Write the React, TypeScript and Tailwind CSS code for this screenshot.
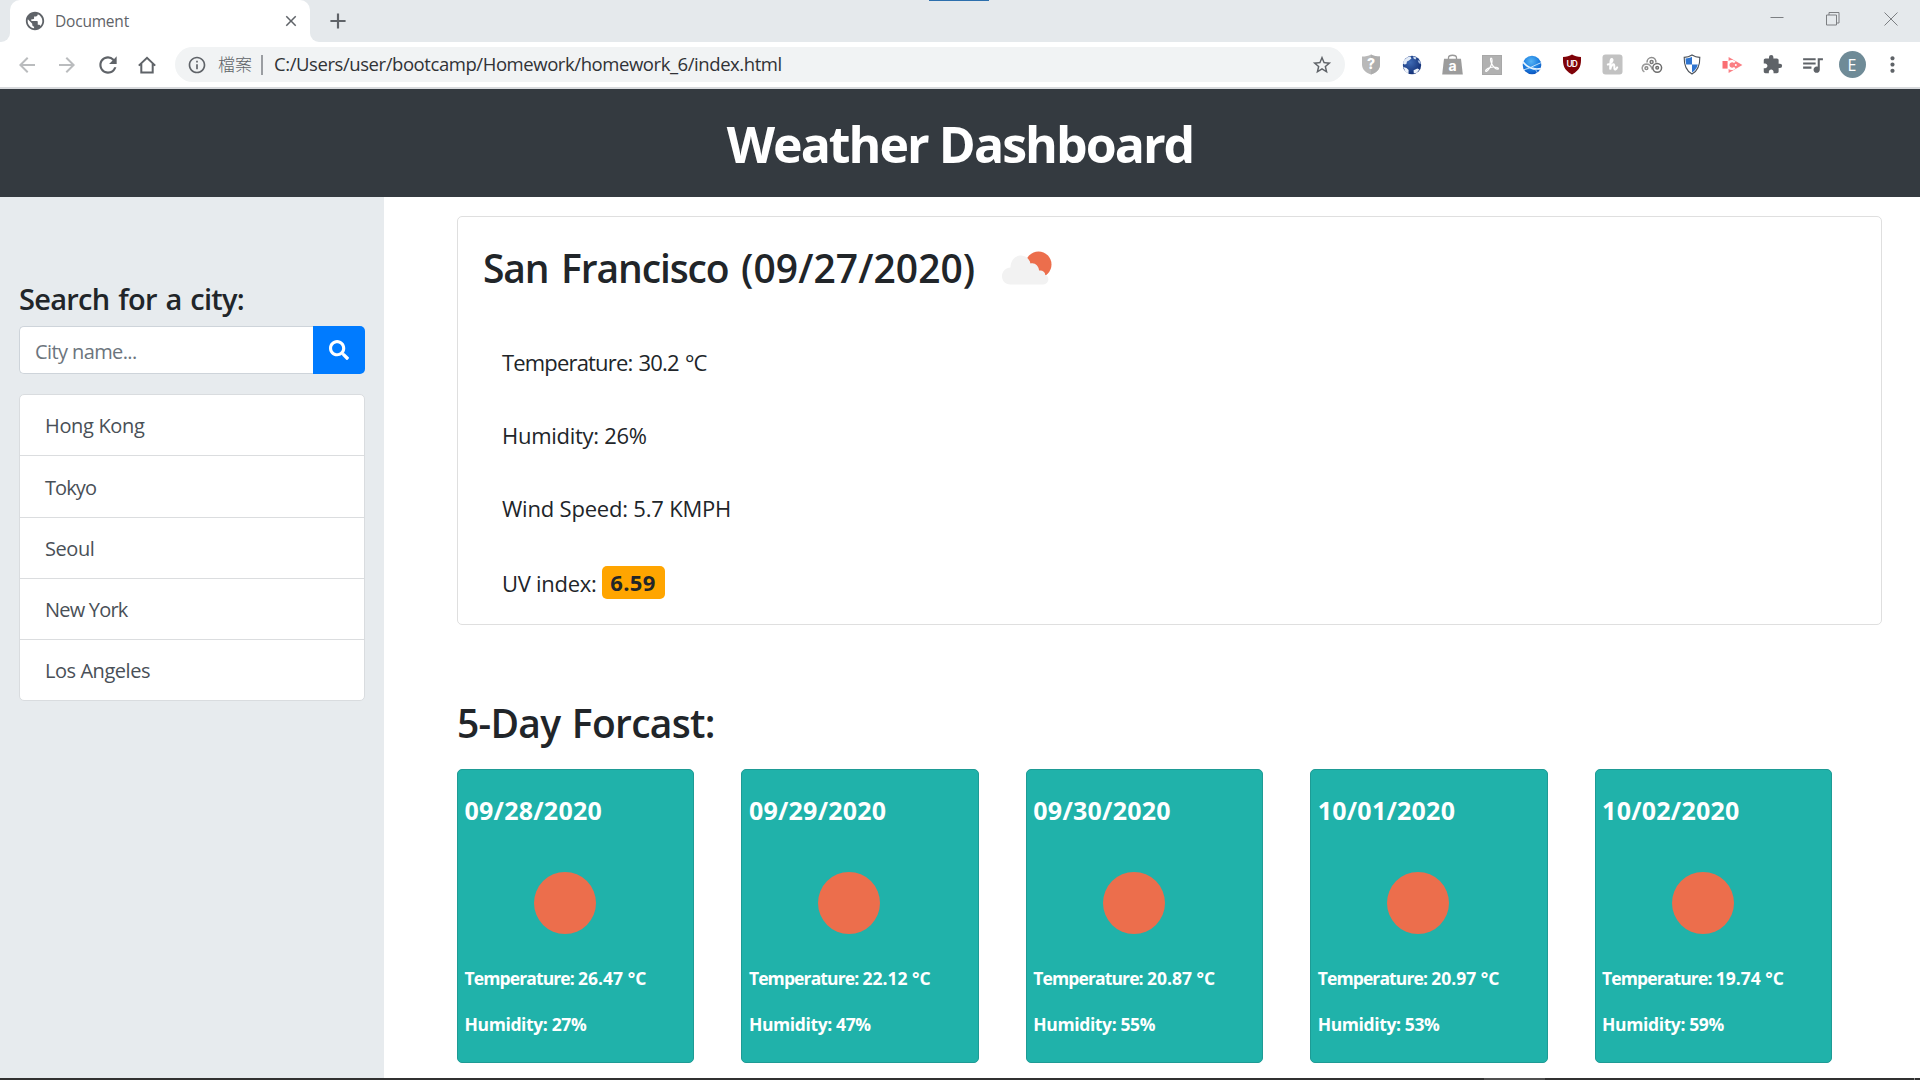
import React from "react";
import {
  MdAdd,
  MdArrowBack,
  MdArrowForward,
  MdClose,
  MdExtension,
  MdInfoOutline,
  MdMoreVert,
  MdPublic,
  MdQueueMusic,
  MdRefresh,
  MdStarOutline,
} from "react-icons/md";
import { FaSearch } from "react-icons/fa";

const cities = [
  { name: "Hong Kong", tracking: "tracking-[-0.33px]" },
  { name: "Tokyo", tracking: "tracking-[-0.9px]" },
  { name: "Seoul", tracking: "tracking-[-0.45px]" },
  { name: "New York", tracking: "tracking-[-0.8px]" },
  { name: "Los Angeles", tracking: "tracking-[-0.45px]" },
];

const forecast = [
  { date: "09/28/2020", temp: "26.47", humidity: "27" },
  { date: "09/29/2020", temp: "22.12", humidity: "47" },
  { date: "09/30/2020", temp: "20.87", humidity: "55" },
  { date: "10/01/2020", temp: "20.97", humidity: "53" },
  { date: "10/02/2020", temp: "19.74", humidity: "59" },
];

function HomeIcon() {
  return (
    <svg width="18" height="18" viewBox="0 0 18 18" fill="none" stroke="#5f6368" strokeWidth="2">
      <path d="M0.8 9.6 L9 1.8 L17.2 9.6 M3.3 7.6 V16.5 H14.7 V7.6" />
    </svg>
  );
}

function QuestionShield() {
  return (
    <svg className="mr-[2px]" width="20" height="21" viewBox="0 0 20 21">
      <path d="M10 0.5 C12.5 2 15.5 2.6 19 2.6 V10.5 C19 15.5 15 18.8 10 20.5 C5 18.8 1 15.5 1 10.5 V2.6 C4.5 2.6 7.5 2 10 0.5Z" fill="#b9b9b9" />
      <path d="M10 0.5 C12.5 2 15.5 2.6 19 2.6 V10.5 C19 15.5 15 18.8 10 20.5Z" fill="#adadad" />
      <text x="10" y="15.4" textAnchor="middle" fontFamily="Inter, sans-serif" fontWeight="800" fontSize="14" fill="#fff">?</text>
    </svg>
  );
}

function BlueGlobe() {
  return (
    <svg width="20" height="20" viewBox="0 0 20 20">
      <defs>
        <radialGradient id="navy" cx="0.4" cy="0.35" r="0.7">
          <stop offset="0" stopColor="#3f6bb5" />
          <stop offset="1" stopColor="#0f2c72" />
        </radialGradient>
      </defs>
      <circle cx="10" cy="10" r="9.2" fill="url(#navy)" />
      <path d="M2.2 5 L5.5 2.2 L8.4 1.6 L9.4 3.4 L7 5.4 L5 6.4 L4.4 9 L2.6 9.6 L1 8.6Z" fill="#e4ecf7" />
      <path d="M11 1.5 L14.5 2.4 L13.5 4.5 L11.8 3.8Z" fill="#cfdcf0" />
      <path d="M15.6 5.6 L17.6 5.6 L18.8 9 L17 8.2Z" fill="#a9bfe2" />
      <path d="M1.4 12 L4.5 13 L6.6 15 L6.5 18.4 L3.4 16.8Z" fill="#eef3fa" />
      <path d="M11.6 15.2 L15.4 13.6 L17.4 14.6 L14.8 17.8 L11.8 18.4Z" fill="#eef3fa" />
    </svg>
  );
}

function BagIcon() {
  return (
    <svg width="21" height="21" viewBox="0 0 21 21">
      <path d="M6.5 5 V3.8 C6.5 0.4 14.5 0.4 14.5 3.8 V5" fill="none" stroke="#999" strokeWidth="1.3" />
      <path d="M2 4.8 H19 L20.8 20.6 H0.2Z" fill="#9c9c9c" />
      <text x="10.5" y="17.2" textAnchor="middle" fontFamily="Inter, sans-serif" fontWeight="700" fontSize="14" fill="#fff">a</text>
    </svg>
  );
}

function PdfIcon() {
  return (
    <svg width="20" height="20" viewBox="0 0 20 20">
      <rect width="20" height="20" fill="#a8a8a8" />
      <rect x="1" y="1" width="18" height="18" fill="#b1b1b1" />
      <path d="M9.2 3.2 C8 3.2 8.6 6.2 9.6 8.6 C10.8 11.4 13.8 14.4 16 14.2 C17.4 13.6 15.2 11.8 11.4 12 C7.6 12.4 3.6 14 3.6 15.8 C4 17.8 7.4 14.4 9 10.6 C10.2 7.6 10.6 3.4 9.2 3.2Z" fill="none" stroke="#fff" strokeWidth="1.2" />
    </svg>
  );
}

function SkyGlobe() {
  return (
    <svg width="20" height="20" viewBox="0 0 20 20">
      <defs>
        <radialGradient id="sky" cx="0.45" cy="0.3" r="0.7">
          <stop offset="0" stopColor="#57b5f5" />
          <stop offset="0.6" stopColor="#1c7fe0" />
          <stop offset="1" stopColor="#0c55bf" />
        </radialGradient>
      </defs>
      <circle cx="10" cy="10" r="9.3" fill="url(#sky)" />
      <path d="M0.6 6.6 C5 12 12 15 19 13.6" fill="none" stroke="#e8f5ff" strokeWidth="1.7" />
      <path d="M1.6 14.8 C6 14 12.5 10.4 19.2 7.6" fill="none" stroke="#d5ecfd" strokeWidth="0.9" />
      <path d="M11 12.8 C14 15 15 16.4 15 17.6" fill="none" stroke="#d5ecfd" strokeWidth="0.8" />
    </svg>
  );
}

function BlockerShield() {
  return (
    <svg width="20" height="21" viewBox="0 0 20 21">
      <path d="M10 0.6 C12.5 2.3 15.5 3 19 3 C19.2 11 18.6 15.8 10 20.4 C1.4 15.8 0.8 11 1 3 C4.5 3 7.5 2.3 10 0.6Z" fill="#7f0309" />
      <text x="9.7" y="12.9" textAnchor="middle" fontFamily="Inter, sans-serif" fontWeight="600" fontSize="8.4" letterSpacing="-0.8" fill="#fff">UD</text>
    </svg>
  );
}

function ScriptH() {
  return (
    <svg width="21" height="21" viewBox="0 0 21 21">
      <rect x="0.5" y="0.5" width="20" height="20" rx="3" fill="#c2c2c2" />
      <path d="M5.8 10.6 C9.6 10 11.4 6 10 5 C8.4 4.6 8.2 9 8.2 15.6 C8.8 12 11.4 8.8 12.2 11 C12.6 13 11.8 15.8 13.4 15.6 C14.4 15.2 14.8 14.4 15.2 13.4" fill="none" stroke="#fff" strokeWidth="2" strokeLinecap="round" />
    </svg>
  );
}

function CirclesIcon() {
  return (
    <svg width="22" height="18" viewBox="0 0 22 18" fill="none" strokeWidth="1.5">
      <path d="M6 6.4 C6 3.6 8 1.6 10.6 1.6 C13.6 1.6 15.4 4 14.8 6.6" stroke="#8d8d8d" />
      <circle cx="10.6" cy="6" r="1.5" stroke="#7a7a7a" />
      <path d="M3.4 16 C-0.4 13.4 1 8.2 5.4 8 C8.4 8 10.4 10.6 11.4 13.4" stroke="#9c9c9c" />
      <circle cx="5.4" cy="12.2" r="1.4" stroke="#8a8a8a" />
      <circle cx="16.2" cy="11.8" r="4.4" stroke="#6d6d6d" />
      <circle cx="16.2" cy="11.8" r="1.3" stroke="#6d6d6d" />
    </svg>
  );
}

function CheckerShield() {
  return (
    <svg width="18" height="21" viewBox="0 0 18 21">
      <path d="M9 1 C11.4 2.6 14 3.4 16.8 3.4 C17 11 15 16.6 9 20 C3 16.6 1 11 1.2 3.4 C4 3.4 6.6 2.6 9 1Z" fill="#fff" stroke="#4b5057" strokeWidth="1.1" />
      <path d="M2.6 4.6 C5 4.4 7 3.8 9 2.8 V10.4 H3.2 C2.7 8.4 2.6 6.4 2.6 4.6Z" fill="#2f74cf" />
      <path d="M9 10.4 H14.8 C14 13.8 12 16.6 9 18.4Z" fill="#2f74cf" />
    </svg>
  );
}

function CastArrow() {
  return (
    <svg width="21" height="18" viewBox="0 0 21 18">
      <path d="M0.5 5 H5.6 V12.6 H0.5Z" fill="#fa6e73" />
      <path d="M6.6 1 L20.4 9 L6.6 17 V13 C8.4 14.6 12 14.4 13.6 12.2 L12 11 C10.4 12.4 7.6 11.6 7.4 9 C7.6 6.4 10.4 5.6 12 7 L13.6 5.8 C12 3.6 8.4 3.4 6.6 5Z" fill="#fb7f84" />
      <circle cx="13.8" cy="9" r="1" fill="#fff" />
    </svg>
  );
}

const extensions = [
  <QuestionShield />,
  <BlueGlobe />,
  <BagIcon />,
  <PdfIcon />,
  <SkyGlobe />,
  <BlockerShield />,
  <ScriptH />,
  <CirclesIcon />,
  <CheckerShield />,
  <CastArrow />,
  <MdExtension size={21} color="#5f6368" />,
  <MdQueueMusic size={25} color="#5f6368" />,
  <span className="flex size-[27px] shrink-0 items-center justify-center rounded-full bg-[#6f8b97] text-[16px] text-white">E</span>,
  <MdMoreVert size={25} color="#5f6368" />,
];

function TabStrip() {
  return (
    <div className="relative flex h-[42px] bg-[#e5e9ec]">
      <div className="absolute left-[929px] top-0 h-px w-[60px] bg-[#2c6fad]" />
      <div className="flex w-[10px] items-end bg-white">
        <div className="h-full w-full rounded-br-[9px] bg-[#e5e9ec]" />
      </div>
      <div className="flex w-[300px] items-center rounded-t-[10px] bg-white pl-[14px] pr-[10.5px]">
        <MdPublic size={22} color="#5f6368" />
        <span className="ml-[9px] flex-1 pt-[2px] text-[15.5px] tracking-[-0.2px] text-[#5f6368]">Document</span>
        <MdClose size={18} color="#5f6368" />
      </div>
      <div className="w-[10px] bg-white">
        <div className="h-full w-full rounded-bl-[9px] bg-[#e5e9ec]" />
      </div>
      <div className="flex w-[35px] items-center justify-center">
        <MdAdd size={26} color="#5f6368" />
      </div>
      <div className="ml-auto flex h-[37px] items-center pr-[22px]">
        <svg className="mr-[42px]" width="14" height="14" stroke="#7c7f82" fill="none"><path d="M0.5 5.5 H13.5" /></svg>
        <svg className="mr-[44px]" width="14" height="14" stroke="#7c7f82" fill="none"><path d="M0.5 3 H10.5 V13 H0.5Z M3 3 V0.5 H13 V11 H10.5" /></svg>
        <svg width="14" height="14" stroke="#7c7f82" fill="none"><path d="M0.5 0.5 L13.5 13.5 M13.5 0.5 L0.5 13.5" /></svg>
      </div>
    </div>
  );
}

function Toolbar() {
  return (
    <div className="flex h-[47px] items-center border-b-2 border-[#d8dadd] bg-white">
      <div className="flex w-[175px] items-center pl-[7px]">
        <div className="flex w-10 justify-center"><MdArrowBack size={24} color="#babcbe" /></div>
        <div className="flex w-10 justify-center"><MdArrowForward size={24} color="#babcbe" /></div>
        <div className="flex w-10 justify-center pl-px"><MdRefresh size={26} color="#5f6368" /></div>
        <div className="flex w-10 justify-center"><HomeIcon /></div>
      </div>
      <div className="flex h-[35px] w-[1170px] items-center rounded-full bg-[#f1f3f4] pl-[12px] pr-[12px]">
        <MdInfoOutline size={20} color="#5f6368" />
        <span className="ml-[11px] w-[35px] whitespace-nowrap pb-px font-['Noto_Sans_CJK_TC',sans-serif] text-[17px] font-light leading-6 text-[#5f6368]">檔案</span>
        <span className="ml-[8px] h-5 w-[2px] bg-[#9a9da1]" />
        <span className="ml-[11px] flex-1 pb-[2px] text-[18.5px] leading-6 tracking-[-0.43px] text-[#303236]">
          C:/Users/user/bootcamp/Homework/homework_6/index.html
        </span>
        <MdStarOutline size={22} color="#5f6368" />
      </div>
      <div className="ml-[7px] flex">
        {extensions.map((icon, i) => (
          <div key={i} className="flex w-10 items-center justify-center">{icon}</div>
        ))}
      </div>
    </div>
  );
}

function Sidebar() {
  return (
    <aside className="w-96 bg-[#e7ebee] px-[19px] pt-[84px]">
      <h4 className="whitespace-nowrap text-[29px] font-semibold leading-9 tracking-[-0.74px] text-[#212529] [word-spacing:2px]">Search for a city:</h4>
      <div className="mt-[9px] flex h-12">
        <div className="flex w-[294px] items-center rounded-l-[5px] border border-r-0 border-[#ced4da] bg-white pl-[15px] pt-[3px] text-[20px] tracking-[-0.6px] text-[#6c757d]">
          City name...
        </div>
        <button className="flex w-[52px] items-center justify-center rounded-r-[5px] bg-[#007bff]">
          <FaSearch size={20} color="#fff" />
        </button>
      </div>
      <ul className="mt-5 grid h-[307px] grid-rows-[61px_62px_61px_61px_60px] divide-y divide-[#dbdddf] rounded-[5px] border border-[#d9dcdf] bg-white text-[20px] text-[#495057]">
        {cities.map((c) => (
          <li key={c.name} className={`flex items-center pl-[25px] pt-[2px] ${c.tracking}`}>{c.name}</li>
        ))}
      </ul>
    </aside>
  );
}

function PartlyCloudy() {
  return (
    <svg className="ml-[26px]" width="52" height="34" viewBox="0 0 51 34">
      <circle cx="37" cy="13.5" r="13" fill="#ec6e4c" />
      <path d="M9 33.5 C3.5 33.5 0.5 29.5 0.5 25 C0.5 20 4.5 16.6 9 16.4 C9 9.5 13.5 4.5 19.6 4.5 C23.6 4.5 26.6 6.8 28.4 10.4 L31 22Z" fill="#f2f2f2" />
      <path d="M24 16.6 C25 12.6 29 11.6 32 12.4 C35.6 13 37.4 16.4 37.6 19.6 C40.6 19 43.6 20.6 43.8 24 C46.4 24.6 47.4 27.4 46.6 29.8 C45.8 32.4 43.6 33.5 41.6 33.5 H9 V22Z" fill="#f2f2f2" />
    </svg>
  );
}

function CurrentWeather() {
  return (
    <section className="h-[409px] rounded-[5px] border border-[#dfdfdf] bg-white pl-[25px] pt-[26.5px] text-[#212529]">
      <div className="flex h-12 items-center">
        <h2 className="whitespace-nowrap text-[39px] font-semibold leading-[48px] tracking-[-1.1px] [word-spacing:3.5px]">
          San Francisco <span className="tracking-[0.05px]">(09/27/2020)</span>
        </h2>
        <PartlyCloudy />
      </div>
      <div className="mt-[54.5px] flex flex-col gap-10 pl-[19px] text-[22px] leading-[33px]">
        <p className="tracking-[-0.83px] [word-spacing:1.3px]">Temperature: 30.2 °C</p>
        <p className="tracking-[-0.28px]">Humidity: 26%</p>
        <p className="tracking-[-0.2px]">Wind Speed: 5.7 KMPH</p>
        <p className="flex items-center tracking-[-0.28px]">
          <span className="pt-[2px]">UV index:</span>
          <span className="ml-[5px] flex h-[33px] w-[63px] items-center justify-center rounded-[5px] bg-[orange] pb-px font-bold tracking-[0.4px]">6.59</span>
        </p>
      </div>
    </section>
  );
}

function ForecastCard({ date, temp, humidity }: { date: string; temp: string; humidity: string }) {
  return (
    <div className="h-[294px] rounded-[5px] border border-[#1e9b95] bg-[#20b2aa] pl-[6.5px] pt-[25px] font-bold text-white">
      <h5 className="text-[25px] leading-[30px] tracking-[0.25px]">{date}</h5>
      <div className="ml-[69.5px] mt-[47px] size-[62px] rounded-full bg-[#ec6e4c]" />
      <p className="mt-[32px] text-[17.5px] leading-6 tracking-[-0.88px]">
        Temperature: <span className="ml-[0.5px] tracking-[0px]">{temp} °C</span>
      </p>
      <p className="mt-[22px] text-[17.5px] leading-6 tracking-[-0.38px]">Humidity: {humidity}%</p>
    </div>
  );
}

export default function App() {
  return (
    <div className="flex h-[1080px] w-[1920px] flex-col overflow-hidden bg-white font-['Open_Sans',sans-serif]">
      <TabStrip />
      <Toolbar />
      <header className="flex h-[108px] items-center justify-center bg-[#343a40] pt-[2px]">
        <h1 className="text-[50px] font-bold tracking-[-1.96px] text-white">Weather Dashboard</h1>
      </header>
      <div className="flex h-[881px]">
        <Sidebar />
        <main className="flex-1 pl-[73px] pr-[38px] pt-[19px]">
          <CurrentWeather />
          <h2 className="mt-[74px] text-[39px] font-semibold leading-[48px] tracking-[-0.7px] text-[#212529] [word-spacing:2px]">5-Day Forcast:</h2>
          <div className="mt-[22px] grid grid-cols-5 gap-x-[47px] pr-[50px]">
            {forecast.map((d) => (
              <ForecastCard key={d.date} {...d} />
            ))}
          </div>
        </main>
      </div>
      <div className="flex h-[2px] bg-[#313131]">
        <div className="ml-[1484px] w-[61px] bg-[#505050]" />
        <div className="ml-[369px] w-px bg-[#8a8a8a]" />
      </div>
    </div>
  );
}
